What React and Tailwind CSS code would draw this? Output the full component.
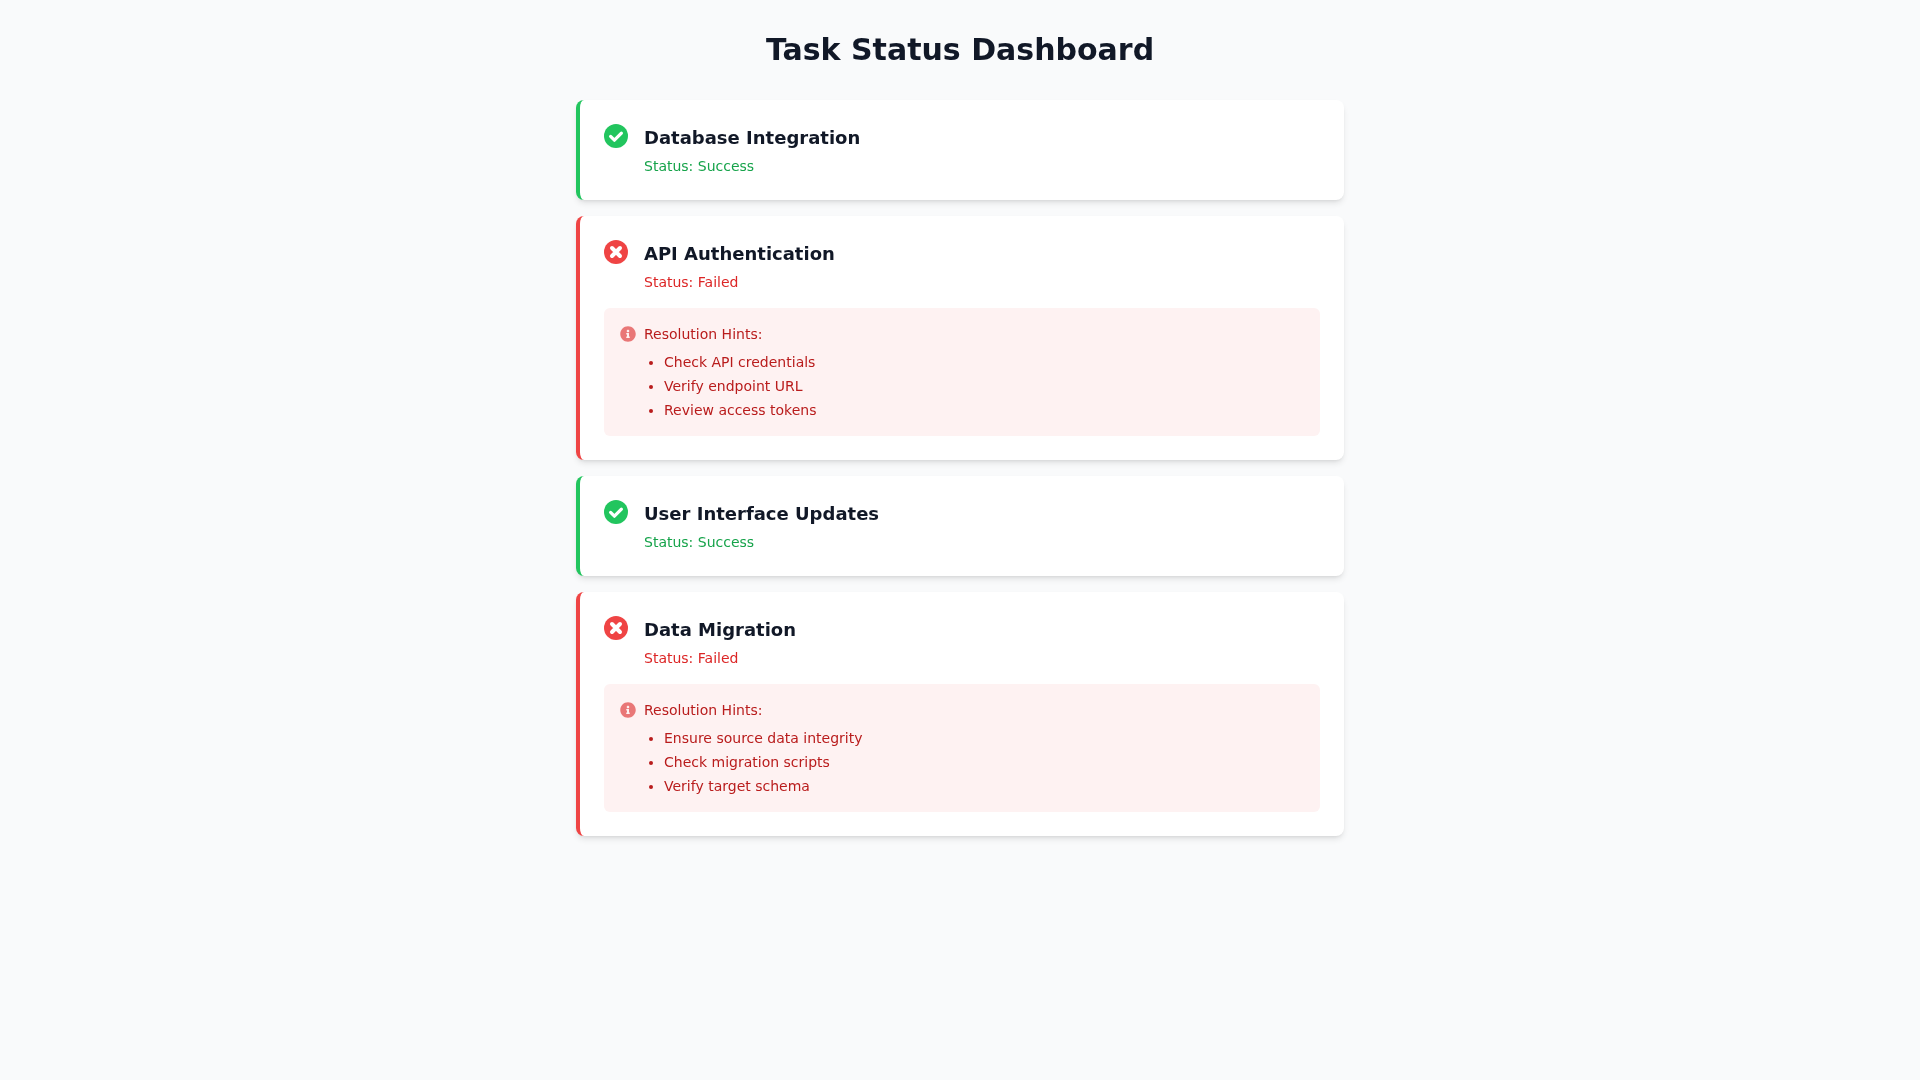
import React from "react";
import { FaInfoCircle } from "react-icons/fa";

const tasks = [
  { id: 1, name: "Database Integration", ok: true },
  {
    id: 2,
    name: "API Authentication",
    ok: false,
    hints: ["Check API credentials", "Verify endpoint URL", "Review access tokens"],
  },
  { id: 3, name: "User Interface Updates", ok: true },
  {
    id: 4,
    name: "Data Migration",
    ok: false,
    hints: ["Ensure source data integrity", "Check migration scripts", "Verify target schema"],
  },
];

const CheckIcon = () => (
  <svg viewBox="0 0 24 24" className="w-6 h-6 shrink-0 mr-4">
    <circle cx="12" cy="12" r="12" fill="#22c55e" />
    <path d="M6.6 12.4 L10.4 16.2 L17.4 9.2" fill="none" stroke="#ffffff" strokeWidth="3.2" strokeLinecap="round" strokeLinejoin="round" />
  </svg>
);

const CrossIcon = () => (
  <svg viewBox="0 0 24 24" className="w-6 h-6 shrink-0 mr-4">
    <circle cx="12" cy="12" r="12" fill="#ef4444" />
    <path d="M8 8 L16 16 M16 8 L8 16" fill="none" stroke="#ffffff" strokeWidth="4" strokeLinecap="round" />
  </svg>
);

const TaskCard = ({ task }) => (
  <div
    className={`bg-white rounded-lg shadow-md p-6 border-l-4 ${
      task.ok ? "border-[#22c55e]" : "border-[#ef4444]"
    }`}
  >
    <div className="flex items-start">
      {task.ok ? <CheckIcon /> : <CrossIcon />}
      <div>
        <h2 className="text-lg font-semibold text-[#111827]">{task.name}</h2>
        <p className={`text-sm mt-1 ${task.ok ? "text-[#16a34a]" : "text-[#dc2626]"}`}>
          Status: {task.ok ? "Success" : "Failed"}
        </p>
      </div>
    </div>
    {task.hints && (
      <div className="mt-4 bg-[#fef2f2] rounded-md p-4">
        <div className="flex items-center text-sm text-[#b91c1c]">
          <FaInfoCircle className="w-4 h-4 mr-2 text-[#dc2626] opacity-60" />
          <span>Resolution Hints:</span>
        </div>
        <ul className="list-disc pl-5 ml-6 mt-2 space-y-1 text-sm text-[#b91c1c]">
          {task.hints.map((hint) => (
            <li key={hint}>{hint}</li>
          ))}
        </ul>
      </div>
    )}
  </div>
);

const App = () => {
  return (
    <div className="min-h-screen bg-[#f9fafb] py-8 font-['DejaVu_Sans',sans-serif]">
      <div className="max-w-3xl mx-auto will-change-transform">
        <h1 className="text-3xl font-bold text-[#111827] text-center mb-8">Task Status Dashboard</h1>
        <div className="space-y-4">
          {tasks.map((task) => (
            <TaskCard key={task.id} task={task} />
          ))}
        </div>
      </div>
    </div>
  );
};

export default App;
